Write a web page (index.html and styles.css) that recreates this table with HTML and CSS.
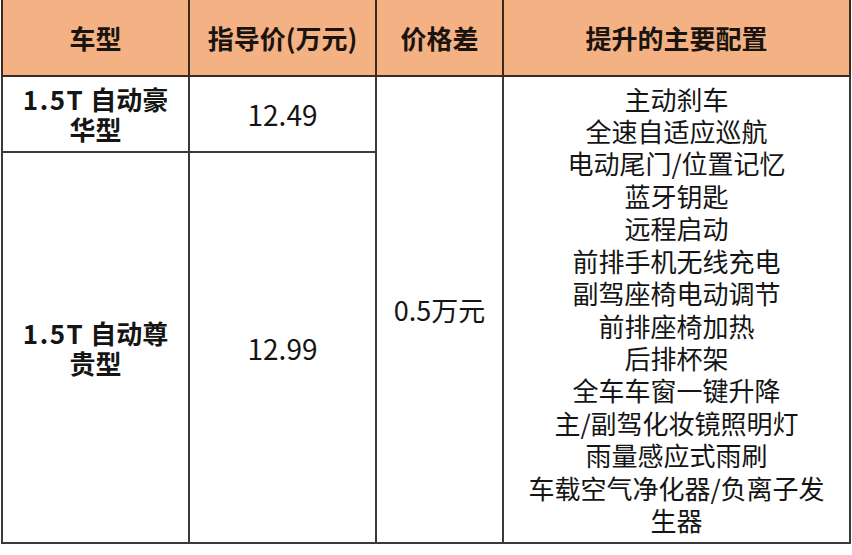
FILE: index.html
```html
<!DOCTYPE html>
<html lang="zh">
<head>
<meta charset="utf-8">
<link rel="stylesheet" href="styles.css">
</head>
<body>
<table class="spec">
  <colgroup>
    <col class="c1"><col class="c2"><col class="c3"><col class="c4">
  </colgroup>
  <thead>
    <tr class="head">
      <th>车型</th>
      <th>指导价(万元)</th>
      <th>价格差</th>
      <th>提升的主要配置</th>
    </tr>
  </thead>
  <tbody>
    <tr class="r1">
      <td class="model"><span class="lat">1.5T</span> 自动豪<br>华型</td>
      <td class="price">12.49</td>
      <td class="diff" rowspan="2">0.5万元</td>
      <td class="features" rowspan="2">
        <div class="list">
          <span>主动刹车</span>
          <span>全速自适应巡航</span>
          <span>电动尾门/位置记忆</span>
          <span>蓝牙钥匙</span>
          <span>远程启动</span>
          <span>前排手机无线充电</span>
          <span>副驾座椅电动调节</span>
          <span>前排座椅加热</span>
          <span>后排杯架</span>
          <span>全车车窗一键升降</span>
          <span>主/副驾化妆镜照明灯</span>
          <span>雨量感应式雨刷</span>
          <span>车载空气净化器/负离子发</span>
          <span>生器</span>
        </div>
      </td>
    </tr>
    <tr class="r2">
      <td class="model"><span class="lat">1.5T</span> 自动尊<br>贵型</td>
      <td class="price">12.99</td>
    </tr>
  </tbody>
</table>
</body>
</html>
```
FILE: styles.css
```css
html, body {
  margin: 0;
  padding: 0;
  background: #ffffff;
}
body {
  font-family: "Noto Sans CJK SC", "Noto Sans", sans-serif;
  color: #151515;
}
.spec {
  margin-left: 1px;
  border-collapse: collapse;
  table-layout: fixed;
  width: 848px;
}
.c1 { width: 187px; }
.c2 { width: 187px; }
.c3 { width: 127px; }
.c4 { width: 347px; }
.spec th, .spec td {
  border: 2px solid #3a3a3a;
  text-align: center;
  vertical-align: middle;
  padding: 0;
}
.spec th {
  border-top: none;
}
.head th {
  background: #f4b183;
  height: 75px;
  font-size: 26px;
  font-weight: 700;
  color: #1a1410;
  border-color: #3a2a20;
}
.r1 td {
  height: 74px;
}
.r2 td {
  height: 389px;
}
.model {
  font-size: 26px;
  font-weight: 700;
  line-height: 30px;
}
.lat {
  letter-spacing: 1.5px;
}
.price {
  font-size: 28px;
}
.diff {
  font-size: 27px;
}
.features {
  font-size: 26px;
  line-height: 32.4px;
}
.list {
  display: flex;
  flex-direction: column;
  align-items: center;
  padding-top: 0;
}
```
